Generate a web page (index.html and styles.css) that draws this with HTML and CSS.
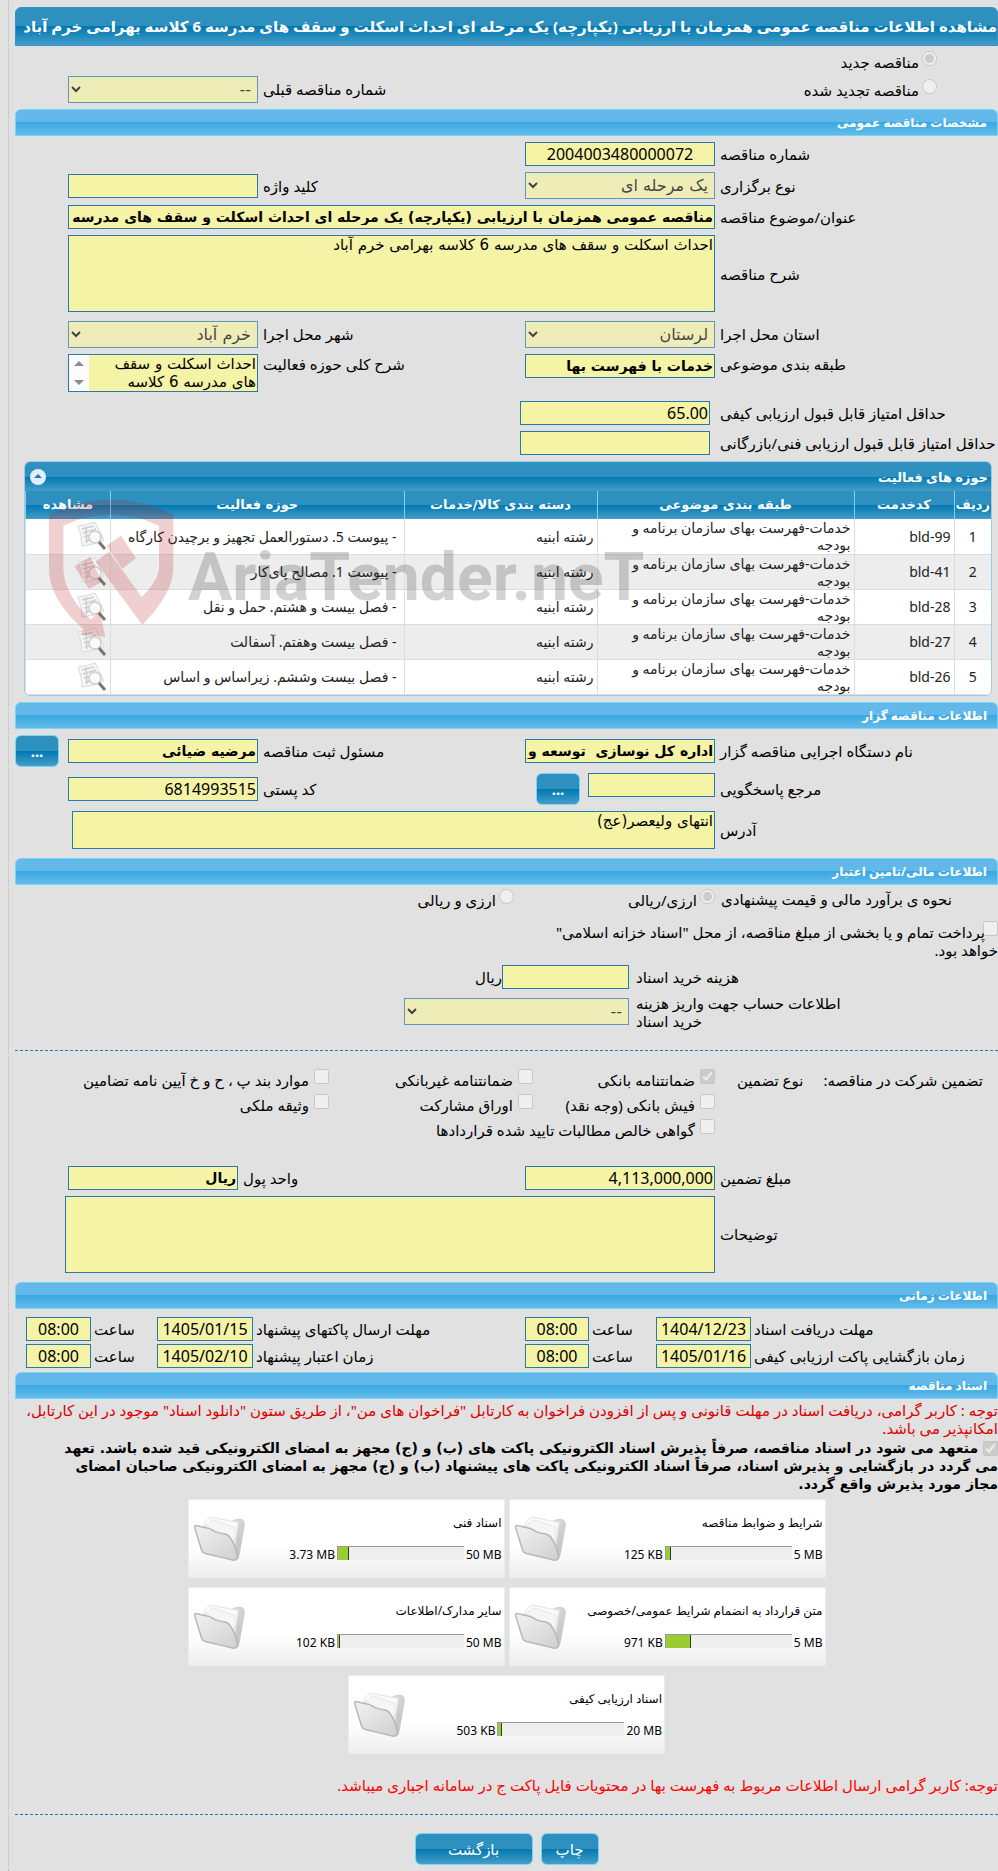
FILE: index.html
```html
<!DOCTYPE html>
<html lang="fa" dir="rtl">
<head>
<meta charset="utf-8">
<title>مشاهده اطلاعات مناقصه عمومی</title>
<link rel="stylesheet" href="styles.css">
</head>
<body>
<svg class="defs" aria-hidden="true">
  <defs>
    <linearGradient id="front" x1="0" y1="0" x2="1" y2="1"><stop offset="0" stop-color="#f2f2f2"/><stop offset="1" stop-color="#cfcfcf"/></linearGradient>
    <linearGradient id="back" x1="0" y1="0" x2="1" y2="1"><stop offset="0" stop-color="#ececec"/><stop offset="1" stop-color="#bcbcbc"/></linearGradient>
    <symbol id="folder" viewBox="0 0 56 50">
      <path d="M10 12 L38 8 Q46 3 51 5 Q54 7 53 12 L48 41 Q46 48 42 46 Z" fill="url(#back)" stroke="#cccccc"/>
      <path d="M12 8 L18 2 L47 8 L43 34 L14 22 Z" fill="#fafafa" stroke="#e2e2e2"/>
      <path d="M14 11 L20 5 L44 13 L42 38 L16 24 Z" fill="#f5f5f5" stroke="#e6e6e6"/>
      <path d="M3 11 Q1 11 2 14 L9 37 Q10 39 13 40 L42 47 Q47 47 46 42 Q44 31 38 23 Q35 19 28 19 Q23 18 17 14 Z" fill="url(#front)" stroke="#b8b8b8" stroke-width="1.6"/>
    </symbol>
    <symbol id="preview" viewBox="0 0 30 30">
      <path d="M1 5 Q10 4 18 1 L27 19 Q18 24 5 25 Q5 15 1 5 Z" fill="#f6f6f6" stroke="#dadada"/>
      <path d="M5 8 L17 5 M6 12 L19 8 M7 16 L14 14 M8 20 L14 19 M9 5 L10 22" stroke="#cfcfcf" stroke-width="1.5" fill="none"/>
      <circle cx="18" cy="16" r="6" fill="#fafafa" stroke="#cdcdcd" stroke-width="1.5"/>
      <path d="M22 21 L28 28" stroke="#777" stroke-width="3"/>
    </symbol>
  </defs>
</svg>
<main class="page">
  <h1 class="title">مشاهده اطلاعات مناقصه عمومی همزمان با ارزیابی (یکپارچه) یک مرحله ای احداث اسکلت و سقف های مدرسه 6 کلاسه بهرامی خرم آباد</h1>

  <div class="kind">
    <div class="option"><input type="radio" name="kind" id="k1" checked disabled><label for="k1">مناقصه جدید</label></div>
    <div class="option"><input type="radio" name="kind" id="k2" disabled><label for="k2">مناقصه تجدید شده</label></div>
    <label class="lbl prev" for="prev">شماره مناقصه قبلی</label>
    <select id="prev" class="prev-box" disabled><option>--</option></select>
  </div>

  <h2 class="bar">مشخصات مناقصه عمومی</h2>
  <div class="form">
    <label class="lbl" for="num">شماره مناقصه</label>
    <input class="center" id="num" value="2004003480000072" readonly>
    <label class="lbl new" for="type">نوع برگزاری</label>
    <select id="type" disabled><option>یک مرحله ای</option></select>
    <label class="lbl" for="key">کلید واژه</label>
    <input id="key" readonly>
    <label class="lbl new" for="subj">عنوان/موضوع مناقصه</label>
    <input class="wide strong" id="subj" value="مناقصه عمومی همزمان با ارزیابی (یکپارچه) یک مرحله ای احداث اسکلت و سقف های مدرسه 6 کلاسه" readonly>
    <label class="lbl new" for="desc">شرح مناقصه</label>
    <textarea class="wide tall" id="desc" readonly>احداث اسکلت و سقف های مدرسه 6 کلاسه بهرامی خرم آباد</textarea>
  </div>
  <div class="form spaced">
    <label class="lbl" for="prov">استان محل اجرا</label>
    <select id="prov" disabled><option>لرستان</option></select>
    <label class="lbl" for="city">شهر محل اجرا</label>
    <select id="city" disabled><option>خرم آباد</option></select>
    <label class="lbl new top" for="cls">طبقه بندی موضوعی</label>
    <input class="strong" id="cls" value="خدمات با فهرست بها" readonly>
    <label class="lbl top" for="area">شرح کلی حوزه فعالیت</label>
    <div class="scroll-box">
      <textarea id="area" readonly>احداث اسکلت و سقف های مدرسه 6 کلاسه</textarea>
      <svg class="arrows" viewBox="0 0 20 36" aria-hidden="true"><path d="M5 11 L10 6 L15 11 Z M5 25 L10 30 L15 25 Z" fill="#8b8b8b"/></svg>
    </div>
  </div>
  <div class="form scores">
    <label class="lbl" for="q1">حداقل امتیاز قابل قبول ارزیابی کیفی</label>
    <input id="q1" value="65.00" readonly>
    <label class="lbl new" for="q2">حداقل امتیاز قابل قبول ارزیابی فنی/بازرگانی</label>
    <input id="q2" readonly>
  </div>

  <section class="grid-box">
    <div class="grid-title"><h3>حوزه های فعالیت</h3>
      <button class="fold" type="button" aria-label="بستن"><svg viewBox="0 0 16 16" aria-hidden="true"><path d="M4 9 L8 5 L12 9 Z" fill="#2779aa"/></svg></button>
    </div>
    <table class="grid">
      <colgroup><col class="c1"><col class="c2"><col class="c3"><col class="c4"><col class="c5"><col class="c6"></colgroup>
      <thead><tr><th>ردیف</th><th>کدخدمت</th><th>طبقه بندی موضوعی</th><th>دسته بندی کالا/خدمات</th><th>حوزه فعالیت</th><th>مشاهده</th></tr></thead>
      <tbody>
        <tr><td>1</td><td><bdi>bld-99</bdi></td><td>خدمات-فهرست بهای سازمان برنامه و بودجه</td><td>رشته ابنیه</td><td>- پیوست 5. دستورالعمل تجهیز و برچیدن کارگاه</td><td><svg class="view"><use href="#preview"/></svg></td></tr>
        <tr><td>2</td><td><bdi>bld-41</bdi></td><td>خدمات-فهرست بهای سازمان برنامه و بودجه</td><td>رشته ابنیه</td><td>- پیوست 1. مصالح پای‌کار</td><td><svg class="view"><use href="#preview"/></svg></td></tr>
        <tr><td>3</td><td><bdi>bld-28</bdi></td><td>خدمات-فهرست بهای سازمان برنامه و بودجه</td><td>رشته ابنیه</td><td>- فصل بیست و هشتم. حمل و نقل</td><td><svg class="view"><use href="#preview"/></svg></td></tr>
        <tr><td>4</td><td><bdi>bld-27</bdi></td><td>خدمات-فهرست بهای سازمان برنامه و بودجه</td><td>رشته ابنیه</td><td>- فصل بیست وهفتم. آسفالت</td><td><svg class="view"><use href="#preview"/></svg></td></tr>
        <tr><td>5</td><td><bdi>bld-26</bdi></td><td>خدمات-فهرست بهای سازمان برنامه و بودجه</td><td>رشته ابنیه</td><td>- فصل بیست وششم. زیراساس و اساس</td><td><svg class="view"><use href="#preview"/></svg></td></tr>
      </tbody>
    </table>
    <div class="mark" dir="ltr">
      <svg class="shield" viewBox="150 115 375 420" aria-hidden="true">
        <path d="M150 165 Q250 120 337 120 Q430 120 523 165 L523 325 Q523 400 430 496 L290 306 L330 276 L428 412 Q480 360 480 325 L480 198 Q410 165 337 165 Q260 165 193 198 L193 325 Q193 400 275 480 L302 455 L319 531 L243 525 L255 510 Q150 420 150 325 Z"/>
        <path d="M366 228 L411 296 L369 327 L323 258 Z M274 291 L308 367 L270 388 L226 320 Z"/>
      </svg>
      <span class="mark-text">AriaTender.neT</span>
    </div>
  </section>

  <h2 class="bar">اطلاعات مناقصه گزار</h2>
  <div class="form owner">
    <label class="lbl" for="org">نام دستگاه اجرایی مناقصه گزار</label>
    <input class="strong" id="org" value="اداره کل نوسازی  توسعه و" readonly>
    <label class="lbl" for="reg">مسئول ثبت مناقصه</label>
    <input class="strong" id="reg" value="مرضیه ضیائی" readonly>
    <button class="btn more" type="button">...</button>
    <label class="lbl new" for="ref">مرجع پاسخگویی</label>
    <div class="pair"><input id="ref" readonly><button class="btn more" type="button">...</button></div>
    <label class="lbl" for="zip">کد پستی</label>
    <input id="zip" value="6814993515" readonly>
    <label class="lbl new" for="addr">آدرس</label>
    <textarea class="wide addr" id="addr" readonly>انتهای ولیعصر(عج)</textarea>
  </div>

  <h2 class="bar">اطلاعات مالی/تامین اعتبار</h2>
  <div class="money">
    <span class="lbl">نحوه ی برآورد مالی و قیمت پیشنهادی</span>
    <div class="option"><input type="radio" name="cur" id="m1" checked disabled><label for="m1">ارزی/ریالی</label></div>
    <div class="option"><input type="radio" name="cur" id="m2" disabled><label for="m2">ارزی و ریالی</label></div>
  </div>
  <div class="treasury"><input type="checkbox" id="tr" disabled><label for="tr">پرداخت تمام و یا بخشی از مبلغ مناقصه، از محل "اسناد خزانه اسلامی" خواهد بود.</label></div>
  <div class="fees">
    <label class="fee-lbl" for="fee">هزینه خرید اسناد</label>
    <div class="pair tight"><input id="fee" readonly><span>ریال</span></div>
    <label class="fee-lbl" for="acc">اطلاعات حساب جهت واریز هزینه خرید اسناد</label>
    <select id="acc" disabled><option>--</option></select>
  </div>
  <hr>
  <div class="guarantee">
    <div class="lead"><span>تضمین شرکت در مناقصه:</span><span>نوع تضمین</span></div>
    <div class="option"><input type="checkbox" id="g1" checked disabled><label for="g1">ضمانتنامه بانکی</label></div>
    <div class="option"><input type="checkbox" id="g2" disabled><label for="g2">ضمانتنامه غیربانکی</label></div>
    <div class="option"><input type="checkbox" id="g3" disabled><label for="g3">موارد بند پ ، ح و خ آیین نامه تضامین</label></div>
    <div class="option new"><input type="checkbox" id="g4" disabled><label for="g4">فیش بانکی (وجه نقد)</label></div>
    <div class="option"><input type="checkbox" id="g5" disabled><label for="g5">اوراق مشارکت</label></div>
    <div class="option"><input type="checkbox" id="g6" disabled><label for="g6">وثیقه ملکی</label></div>
    <div class="option new whole"><input type="checkbox" id="g7" disabled><label for="g7">گواهی خالص مطالبات تایید شده قراردادها</label></div>
  </div>
  <div class="form amount">
    <label class="lbl" for="amt">مبلغ تضمین</label>
    <input id="amt" value="4,113,000,000" readonly>
    <label class="lbl" for="unit">واحد پول</label>
    <input class="strong" id="unit" value="ریال" readonly>
    <label class="lbl note-lbl" for="note">توضیحات</label>
    <textarea class="note" id="note" readonly></textarea>
  </div>

  <h2 class="bar">اطلاعات زمانی</h2>
  <div class="times">
    <label for="d1">مهلت دریافت اسناد</label><input id="d1" value="1404/12/23" readonly>
    <label for="h1">ساعت</label><input id="h1" value="08:00" readonly>
    <label for="d2">مهلت ارسال پاکتهای پیشنهاد</label><input id="d2" value="1405/01/15" readonly>
    <label for="h2">ساعت</label><input id="h2" value="08:00" readonly>
    <label class="new" for="d3">زمان بازگشایی پاکت ارزیابی کیفی</label><input id="d3" value="1405/01/16" readonly>
    <label for="h3">ساعت</label><input id="h3" value="08:00" readonly>
    <label for="d4">زمان اعتبار پیشنهاد</label><input id="d4" value="1405/02/10" readonly>
    <label for="h4">ساعت</label><input id="h4" value="08:00" readonly>
  </div>

  <h2 class="bar">اسناد مناقصه</h2>
  <p class="notice">توجه : کاربر گرامی، دریافت اسناد در مهلت قانونی و پس از افزودن فراخوان به کارتابل "فراخوان های من"، از طریق ستون "دانلود اسناد" موجود در این کارتابل، امکانپذیر می باشد.</p>
  <p class="pledge"><input type="checkbox" id="pl" checked disabled> <label for="pl">متعهد می شود در اسناد مناقصه، صرفاً پذیرش اسناد الکترونیکی پاکت های (ب) و (ج) مجهز به امضای الکترونیکی قید شده باشد. تعهد می گردد در بازگشایی و پذیرش اسناد، صرفاً اسناد الکترونیکی پاکت های پیشنهاد (ب) و (ج) مجهز به امضای الکترونیکی صاحبان امضای مجاز مورد پذیرش واقع گردد.</label></p>

  <div class="cards">
    <article class="card"><div class="info"><span>شرایط و ضوابط مناقصه</span><div class="use"><bdi>5 MB</bdi><div class="track"><div class="fill" style="width:4%"></div></div><bdi>125 KB</bdi></div></div><svg class="folder"><use href="#folder"/></svg></article>
    <article class="card"><div class="info"><span>اسناد فنی</span><div class="use"><bdi>50 MB</bdi><div class="track"><div class="fill" style="width:9%"></div></div><bdi>3.73 MB</bdi></div></div><svg class="folder"><use href="#folder"/></svg></article>
    <article class="card"><div class="info"><span>متن قرارداد به انضمام شرایط عمومی/خصوصی</span><div class="use"><bdi>5 MB</bdi><div class="track"><div class="fill" style="width:20%"></div></div><bdi>971 KB</bdi></div></div><svg class="folder"><use href="#folder"/></svg></article>
    <article class="card"><div class="info"><span>سایر مدارک/اطلاعات</span><div class="use"><bdi>50 MB</bdi><div class="track"><div class="fill" style="width:2%"></div></div><bdi>102 KB</bdi></div></div><svg class="folder"><use href="#folder"/></svg></article>
    <article class="card"><div class="info"><span>اسناد ارزیابی کیفی</span><div class="use"><bdi>20 MB</bdi><div class="track"><div class="fill" style="width:3%"></div></div><bdi>503 KB</bdi></div></div><svg class="folder"><use href="#folder"/></svg></article>
  </div>
  <p class="notice bright">توجه: کاربر گرامی ارسال اطلاعات مربوط به فهرست بها در محتویات فایل پاکت ج در سامانه اجباری میباشد.</p>
  <hr>
  <div class="actions"><button class="btn" type="button">چاپ</button><button class="btn back" type="button">بازگشت</button></div>
</main>
</body>
</html>
```
FILE: styles.css
```css
* { box-sizing: border-box; }
html { overflow-x: hidden; background: #e1e1e1; }
body {
  margin: 0;
  background: #e1e1e1;
  color: #000;
  font: 15px/18px "Noto Sans", "DejaVu Sans", sans-serif;
}
.defs { position: absolute; width: 0; height: 0; }
.page {
  margin-left: 8px;
  padding: 7px 0 6px 6px;
  border-left: 1px dotted #bbb;
}
h1, h2, h3, p { margin: 0; }
.title {
  height: 39px;
  border: 1px solid #3a8fd0;
  border-radius: 6px 6px 0 0;
  background: linear-gradient(#2e90bf 0 50%, #0078b0 50%, #459dc8);
  color: #fff;
  font-size: 15px;
  line-height: 37px;
  white-space: nowrap;
}
.bar {
  height: 27px;
  padding: 0 10px;
  border: 1px solid #77d5f7;
  border-radius: 6px 6px 0 0;
  background: linear-gradient(#62b9e9 0 48%, #3aa8e3 50%, #64bbea);
  color: #fff;
  font-size: 12px;
  line-height: 25px;
}
input, select, textarea {
  margin: 0;
  color: #000;
  font: 16px/20px "Noto Sans", "DejaVu Sans", sans-serif;
}
input:not([type]), textarea {
  display: block;
  width: 100%;
  height: 24px;
  padding: 0 1px;
  border: 1px solid #2779aa;
  border-radius: 0;
  background: #f5f3a6;
  outline: none;
  resize: none;
}
textarea { overflow: hidden; font: 15px/18px "DejaVu Sans", sans-serif; }
input.center { text-align: center; }
input.strong { font: bold 14px/20px "DejaVu Sans", sans-serif; }
select {
  width: 100%;
  height: 27px;
  padding: 0 2px;
  border: 1px solid #2779aa;
  border-radius: 0;
  background: #f5f3a6;
  color: #000;
  font: 16px/20px "DejaVu Sans", sans-serif;
}
select:disabled { opacity: .7; color: #000; }
input[type="radio"], input[type="checkbox"] { width: 15px; height: 15px; flex: none; }
.option { display: flex; align-items: flex-start; gap: 3px; white-space: nowrap; }
.option label { padding-top: 2px; }
.new { grid-column-start: 1; }
.lbl { padding-left: 5px; text-align: end; }
.kind {
  display: grid;
  grid-template-columns: 1fr 540px 190px 53px;
  align-items: center;
  padding: 1px 0 6px;
}
.kind .option { grid-column: 1; height: 28px; padding: 4px 61px 0 0; }
.kind .prev { grid-column: 2; grid-row: 2; }
.kind .prev-box { grid-column: 3; grid-row: 2; }
.form {
  display: grid;
  grid-template-columns: 1fr 190px 267px 190px 53px;
  row-gap: 6px;
  align-items: center;
  padding-top: 6px;
}
.form .wide { grid-column: 2 / 5; }
.tall, .note { height: 77px; }
.spaced { padding-top: 9px; align-items: start; }
.spaced .lbl { padding-top: 4px; }
.spaced .lbl.top { padding-top: 1px; }
.scroll-box { display: flex; height: 38px; border: 1px solid #2779aa; background: #f5f3a6; }
.scroll-box textarea { flex: 1; height: 36px; border: 0; }
.arrows { width: 20px; height: 36px; background: #fcfcfc; flex: none; }
.scores { grid-template-columns: 1fr 190px 505px; padding: 9px 0 6px; }
.scores .lbl { padding-left: 10px; white-space: nowrap; }

.grid-box {
  position: relative;
  margin: 0 6px 6px 9px;
  border: 1px solid #a6c9e2;
  border-radius: 6px;
  background: #fff;
  overflow: hidden;
}
.grid-title {
  display: flex;
  justify-content: space-between;
  align-items: center;
  height: 29px;
  padding: 0 3px 0 5px;
  background: linear-gradient(#2e90bf 0 50%, #0078b0 50%, #459dc8);
  color: #fff;
}
.grid-title h3 { font-size: 13px; }
.fold { width: 16px; height: 16px; padding: 0; border: 0; border-radius: 50%; background: #dfeffc; }
.fold svg { display: block; }
.grid { width: 100%; border-collapse: collapse; table-layout: fixed; }
.c1 { width: 37px; } .c2 { width: 100px; } .c3 { width: 257px; } .c4 { width: 193px; } .c6 { width: 85px; }
.grid th {
  height: 28px;
  padding: 0;
  border-left: 1px solid #77d5f7;
  background: linear-gradient(#2e90bf 0 50%, #0078b0 50%, #459dc8);
  color: #fff;
  font: bold 13px/18px "DejaVu Sans", sans-serif;
}
.grid td {
  height: 35px;
  padding: 0 3px;
  border-left: 1px solid #ddd;
  border-bottom: 1px solid #ddd;
  color: #222;
  font-size: 14px;
  line-height: 17px;
}
.grid td:first-child { text-align: center; }
.grid td:nth-child(5) { padding-right: 7px; }
.grid tbody tr:nth-child(even) { background: #ededed; }
.view { display: block; width: 30px; height: 30px; }
.mark { position: absolute; left: 24px; top: 36px; display: flex; align-items: center; opacity: .2; pointer-events: none; }
.shield { width: 125px; height: 140px; fill: #b8141c; flex: none; }
.mark-text { margin-left: 14px; padding-top: 20px; color: #222; font: bold 66px/90px Roboto, sans-serif; }

.btn {
  min-width: 58px;
  height: 32px;
  padding: 0;
  border: 1px solid #77d5f7;
  border-radius: 6px;
  background: linear-gradient(#2e90bf 0 50%, #0078b0 50%, #459dc8);
  color: #fff;
  font: 15px/20px "Noto Sans", "DejaVu Sans", sans-serif;
}
.btn.more { min-width: 0; width: 44px; font-weight: bold; }
.btn.back { width: 118px; }
.owner { padding-bottom: 9px; }
.owner > .more { margin-right: 9px; }
.pair { display: flex; gap: 8px; }
.pair input:not([type]) { width: 127px; }
.pair.tight { gap: 0; align-items: center; }
.addr { height: 38px; }
.form .addr { margin-left: 4px; width: auto; }

.money { display: grid; grid-template-columns: 1fr 201px 500px; padding-top: 4px; align-items: center; }
.money .option { padding-right: 1px; }
.treasury { display: flex; align-items: flex-start; width: 455px; padding-top: 12px; margin-bottom: 6px; }
.treasury input { margin-left: -15px; }
.treasury label { text-indent: 13px; padding-top: 2px; }
.fees { display: grid; grid-template-columns: 1fr 225px 389px; row-gap: 5px; align-items: center; }
.fee-lbl { grid-column: 1; padding-right: 150px; padding-left: 7px; text-align: end; }
hr { height: 0; margin: 20px 0 18px; border: 0; border-top: 1px dashed #2779aa; }
.guarantee { display: grid; grid-template-columns: 1fr 182px 204px 314px; row-gap: 5px; }
.guarantee .option { gap: 5px; }
.lead { display: flex; gap: 20px; padding: 2px 15px 0 0; white-space: nowrap; }
.guarantee .option.new { grid-column: 2; }
.guarantee .whole { grid-column: 2 / 5; }
.amount {
  grid-template-columns: 1fr 190px 287px 170px 3px 50px;
  padding: 27px 0 9px;
}
.note-lbl { grid-column: 1; }
.form .note { grid-column: 2 / 6; }

.times {
  display: grid;
  grid-template-columns: 1fr 95px 67px 64px 272px 96px 66px 65px 11px;
  row-gap: 3px;
  align-items: center;
  padding: 8px 0 4px;
}
.times label { padding-left: 3px; text-align: end; white-space: nowrap; }
.times input { text-align: center; }
.notice { padding-top: 2px; color: #d00; }
.pledge { padding: 2px 0 0 26px; font: bold 14px/18px "DejaVu Sans", sans-serif; }
.pledge input { vertical-align: middle; }
.cards { display: flex; flex-wrap: wrap; justify-content: center; gap: 9px 4px; width: 640px; margin: 6px auto 0; }
.card {
  display: flex;
  width: 317px;
  height: 79px;
  padding: 14px 2px 0 4px;
  border: 1px solid #ececec;
  background: linear-gradient(#fff 60%, #eee);
  font-size: 12px;
}
.info { flex: 1; display: flex; flex-direction: column; gap: 14px; }
.use { display: flex; gap: 2px; }
.track { width: 127px; height: 14px; border-top: 1px solid #999; border-left: 1px solid #999; background: #eee; direction: ltr; }
.fill { height: 100%; background: #9acd32; border-right: 1px solid #333; }
.folder { width: 54px; height: 50px; }
.bright { color: #f00; margin-top: 20px; }
.actions { display: flex; justify-content: center; gap: 8px; }
```
